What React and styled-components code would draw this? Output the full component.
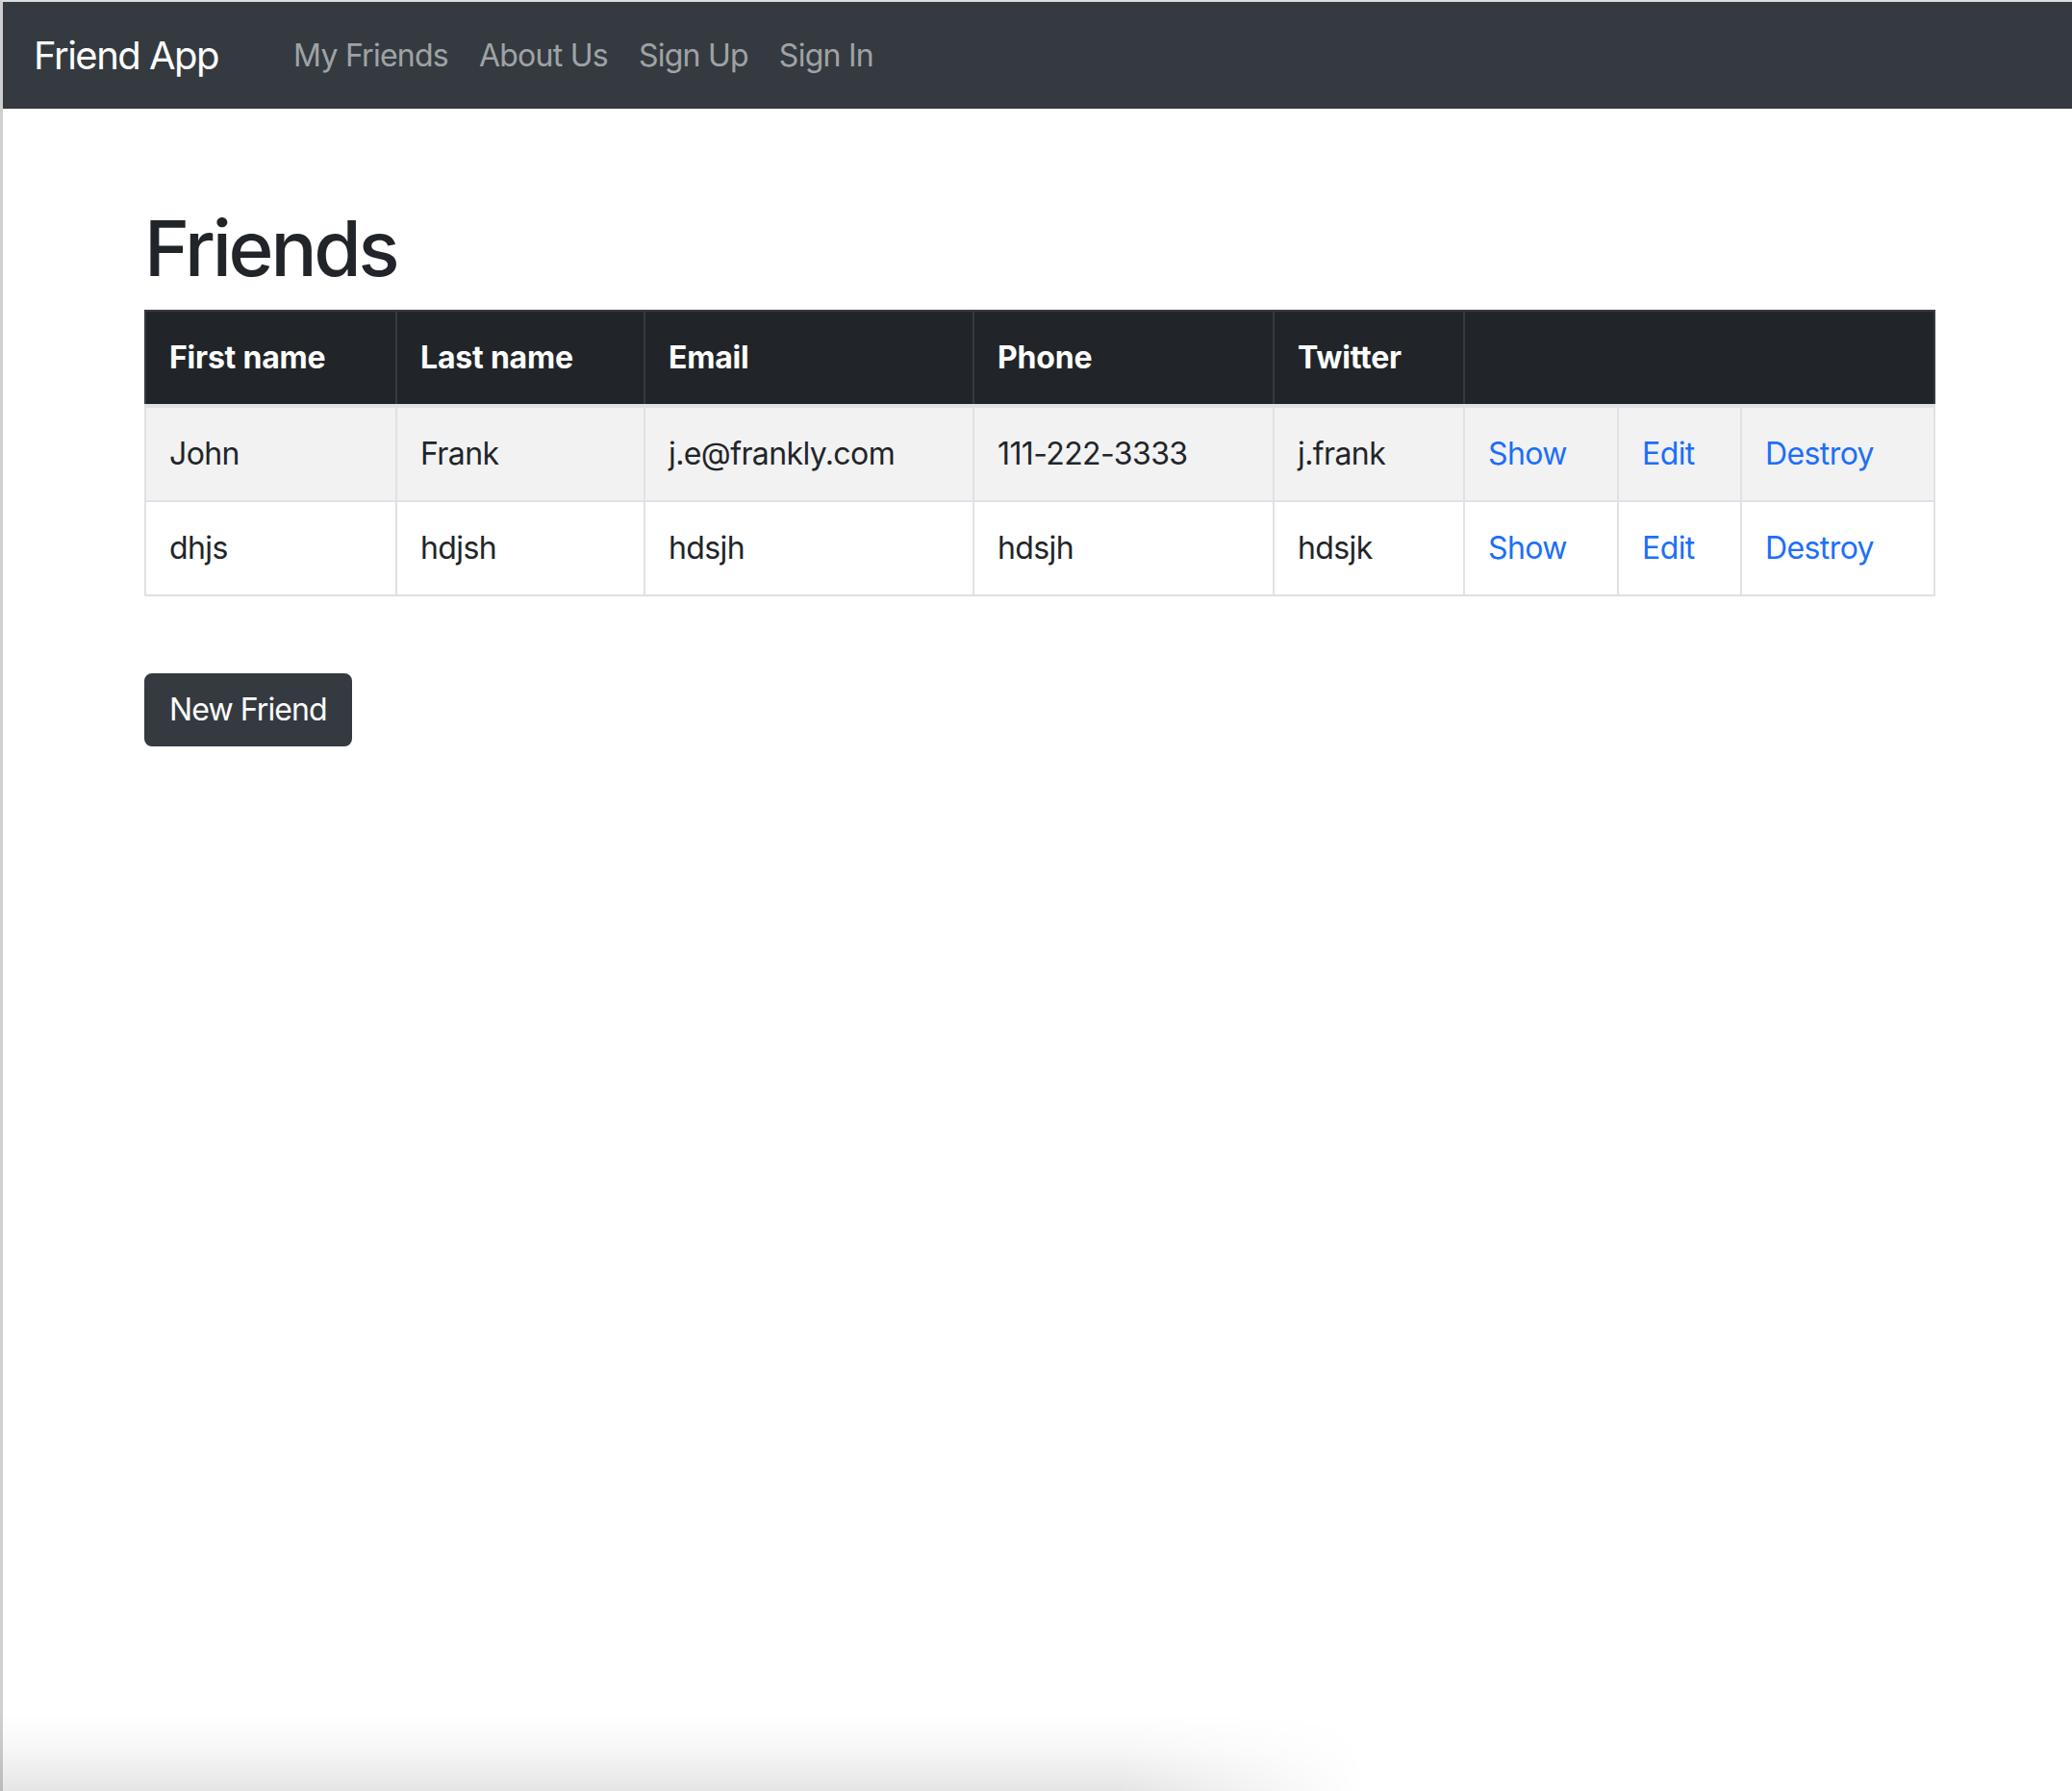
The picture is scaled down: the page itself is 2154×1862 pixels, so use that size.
import React from "react";
import styled, { createGlobalStyle } from "styled-components";

const GlobalStyle = createGlobalStyle`
  html, body {
    margin: 0;
    padding: 0;
    background: #ffffff;
  }
  body {
    font-family: Inter, "Noto Sans", "Liberation Sans", sans-serif;
    color: #212529;
    -webkit-font-smoothing: antialiased;
  }
  * { box-sizing: border-box; }
`;

const Window = styled.div`
  min-height: 1862px;
  border-left: 3px solid #cfcfcf;
  border-top: 2px solid #dcdcdc;
  background: #ffffff;
`;

const Navbar = styled.nav`
  display: flex;
  align-items: center;
  height: 111px;
  padding: 0 32px;
  background: #343a40;
`;

const Brand = styled.a`
  font-size: 40px;
  line-height: 60px;
  color: #ffffff;
  text-decoration: none;
  margin-right: 62px;
  letter-spacing: -1.5px;
`;

const NavList = styled.div`
  display: flex;
  align-items: center;
`;

const NavLink = styled.a`
  font-size: 32px;
  line-height: 48px;
  padding: 0 16px;
  color: rgba(255, 255, 255, 0.55);
  text-decoration: none;
  letter-spacing: -0.75px;
`;

const Container = styled.main`
  width: 1860px;
  margin: 0 0 0 147px;
  padding-top: 97px;
`;

const Title = styled.h1`
  font-size: 80px;
  line-height: 96px;
  font-weight: 500;
  margin: 0 0 16px;
  letter-spacing: -3.2px;
`;

const Table = styled.table`
  width: 1860px;
  table-layout: fixed;
  border-collapse: collapse;
  font-size: 32px;
  line-height: 48px;
`;

const HeadCell = styled.th`
  background: #212529;
  color: #ffffff;
  font-weight: 700;
  text-align: left;
  padding: 24px 24px;
  border: 2px solid #373b3e;
  letter-spacing: -0.2px;
`;

const HeadRow = styled.tr`
  border-bottom: 4px solid #dee2e6;
`;

const Row = styled.tr`
  background: ${(p) => (p.$striped ? "#f2f2f2" : "#ffffff")};
`;

const Cell = styled.td`
  padding: 24px 24px;
  border: 2px solid #dee2e6;
  white-space: nowrap;
  letter-spacing: -0.6px;
`;

const ActionLink = styled.a`
  color: #1d6ff8;
  text-decoration: none;
`;

const NewButton = styled.button`
  margin-top: 80px;
  height: 76px;
  padding: 0 24px;
  font-family: inherit;
  font-size: 32px;
  line-height: 48px;
  color: #ffffff;
  background: #343a40;
  border: 2px solid #343a40;
  border-radius: 8px;
  letter-spacing: -0.9px;
  cursor: pointer;
`;

const BottomShade = styled.div`
  position: fixed;
  left: 0;
  bottom: 0;
  width: 1420px;
  height: 80px;
  pointer-events: none;
  background: linear-gradient(to bottom, rgba(0, 0, 0, 0) 0%, rgba(0, 0, 0, 0.03) 45%, rgba(0, 0, 0, 0.1) 100%);
  -webkit-mask-image: linear-gradient(to right, #000 82%, transparent 100%);
  mask-image: linear-gradient(to right, #000 82%, transparent 100%);
`;

const friends = [
  { first: "John", last: "Frank", email: "j.e@frankly.com", phone: "111-222-3333", twitter: "j.frank" },
  { first: "dhjs", last: "hdjsh", email: "hdsjh", phone: "hdsjh", twitter: "hdsjk" },
];

const colWidths = [261, 258, 342, 312, 198, 160, 128, 201];

export default function App() {
  return (
    <>
      <GlobalStyle />
      <Window>
        <Navbar>
          <Brand href="#">Friend App</Brand>
          <NavList>
            <NavLink href="#">My Friends</NavLink>
            <NavLink href="#">About Us</NavLink>
            <NavLink href="#">Sign Up</NavLink>
            <NavLink href="#">Sign In</NavLink>
          </NavList>
        </Navbar>
        <Container>
          <Title>Friends</Title>
          <Table>
            <colgroup>
              {colWidths.map((w, i) => (
                <col key={i} style={{ width: w }} />
              ))}
            </colgroup>
            <thead>
              <HeadRow>
                <HeadCell>First name</HeadCell>
                <HeadCell>Last name</HeadCell>
                <HeadCell>Email</HeadCell>
                <HeadCell>Phone</HeadCell>
                <HeadCell>Twitter</HeadCell>
                <HeadCell colSpan={3}></HeadCell>
              </HeadRow>
            </thead>
            <tbody>
              {friends.map((f, i) => (
                <Row key={i} $striped={i % 2 === 0}>
                  <Cell>{f.first}</Cell>
                  <Cell>{f.last}</Cell>
                  <Cell>{f.email}</Cell>
                  <Cell>{f.phone}</Cell>
                  <Cell>{f.twitter}</Cell>
                  <Cell><ActionLink href="#">Show</ActionLink></Cell>
                  <Cell><ActionLink href="#">Edit</ActionLink></Cell>
                  <Cell><ActionLink href="#">Destroy</ActionLink></Cell>
                </Row>
              ))}
            </tbody>
          </Table>
          <NewButton>New Friend</NewButton>
        </Container>
        <BottomShade />
      </Window>
    </>
  );
}
